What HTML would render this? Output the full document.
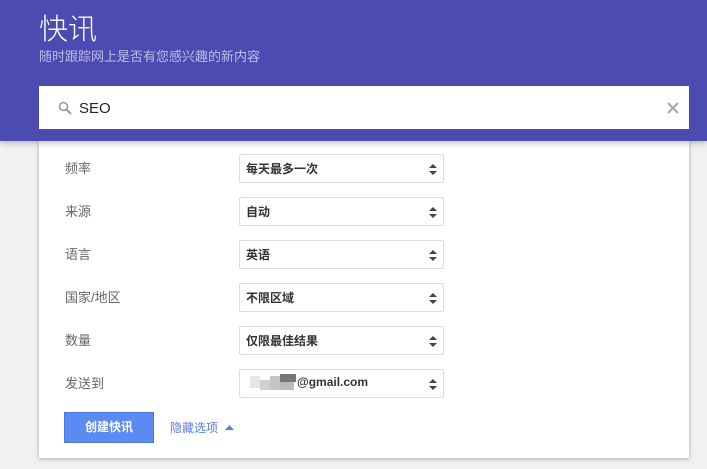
<!DOCTYPE html>
<html><head><meta charset="utf-8"><style>
*{margin:0;padding:0;box-sizing:border-box}
body{width:707px;height:469px;background:#f1f1f1;font-family:"Liberation Sans","Noto Sans CJK SC",sans-serif;position:relative;overflow:hidden}
.hdr{position:absolute;left:0;top:0;width:707px;height:141px;background:#4c4bb2;box-shadow:0 2px 6px rgba(0,0,0,.25);z-index:2}
.t{position:absolute;left:39px;top:6px;font-size:29px;color:#fff;font-weight:300;font-family:"Noto Sans CJK SC",sans-serif}
.st{position:absolute;left:39px;top:46px;font-size:13px;color:#bdbde6}
.sb{position:absolute;left:39px;top:86px;width:650px;height:43px;background:#fff}
.sb .q{position:absolute;left:40px;top:14px;font-size:15px;color:#222}
.card{position:absolute;left:39px;top:141px;width:650px;height:317px;background:#fff;box-shadow:0 1px 4px rgba(0,0,0,.3);z-index:1}
.lb{position:absolute;left:26px;font-size:13px;color:#666}
.sel{position:absolute;left:200px;width:205px;height:29px;border:1px solid #dcdcdc;border-radius:2px;font-size:12px;font-weight:bold;color:#333;padding:5px 0 0 6px}
.sel svg{position:absolute;right:6px;top:9px}
.btn{position:absolute;left:25px;top:271px;width:90px;height:31px;background:#5b8af2;border:1px solid #4a7ae0;color:#fff;font-size:12px;font-weight:bold;text-align:center;line-height:29px}
.lk{position:absolute;left:131px;top:278px;font-size:12px;color:#5a7ee0}
</style></head><body>
<div class="hdr">
<div class="t">快讯</div>
<div class="st">随时跟踪网上是否有您感兴趣的新内容</div>
<div class="sb">
<svg style="position:absolute;left:19px;top:15px" width="14" height="14" viewBox="0 0 14 14"><circle cx="5.5" cy="5.5" r="4" fill="none" stroke="#999" stroke-width="1.6"/><line x1="8.5" y1="8.5" x2="13" y2="13" stroke="#999" stroke-width="2"/></svg>
<div class="q">SEO</div>
<svg style="position:absolute;right:10px;top:16px" width="12" height="12" viewBox="0 0 12 12"><path d="M1 1L11 11M11 1L1 11" stroke="#aaa" stroke-width="2.2"/></svg>
</div>
</div>
<div class="card">
<div class="lb" style="top:17px">频率</div>
<div class="lb" style="top:60px">来源</div>
<div class="lb" style="top:103px">语言</div>
<div class="lb" style="top:146px">国家/地区</div>
<div class="lb" style="top:189px">数量</div>
<div class="lb" style="top:232px">发送到</div>
<div class="sel" style="top:13px">每天最多一次<svg width="8" height="11"><path d="M0 4L4 0L8 4ZM0 7L8 7L4 11Z" fill="#444"/></svg></div>
<div class="sel" style="top:56px">自动<svg width="8" height="11"><path d="M0 4L4 0L8 4ZM0 7L8 7L4 11Z" fill="#444"/></svg></div>
<div class="sel" style="top:99px">英语<svg width="8" height="11"><path d="M0 4L4 0L8 4ZM0 7L8 7L4 11Z" fill="#444"/></svg></div>
<div class="sel" style="top:142px">不限区域<svg width="8" height="11"><path d="M0 4L4 0L8 4ZM0 7L8 7L4 11Z" fill="#444"/></svg></div>
<div class="sel" style="top:185px">仅限最佳结果<svg width="8" height="11"><path d="M0 4L4 0L8 4ZM0 7L8 7L4 11Z" fill="#444"/></svg></div>
<div class="sel" style="top:228px;padding-left:57px">
<span style="position:absolute;left:10px;top:6px;width:10px;height:12px;background:#e6e6e6"></span>
<span style="position:absolute;left:20px;top:10px;width:10px;height:10px;background:#d0d0d0"></span>
<span style="position:absolute;left:30px;top:6px;width:10px;height:14px;background:#c4c4c4"></span>
<span style="position:absolute;left:40px;top:4px;width:16px;height:8px;background:#777"></span>
<span style="position:absolute;left:40px;top:12px;width:14px;height:8px;background:#bbb"></span>
@gmail.com<svg width="8" height="11"><path d="M0 4L4 0L8 4ZM0 7L8 7L4 11Z" fill="#444"/></svg></div>
<div class="btn">创建快讯</div>
<div class="lk">隐藏选项 <svg width="9" height="5" style="margin-left:4px;vertical-align:2px"><path d="M0 5L4.5 0L9 5Z" fill="#5a7ee0"/></svg></div>
</div>
</body></html>
